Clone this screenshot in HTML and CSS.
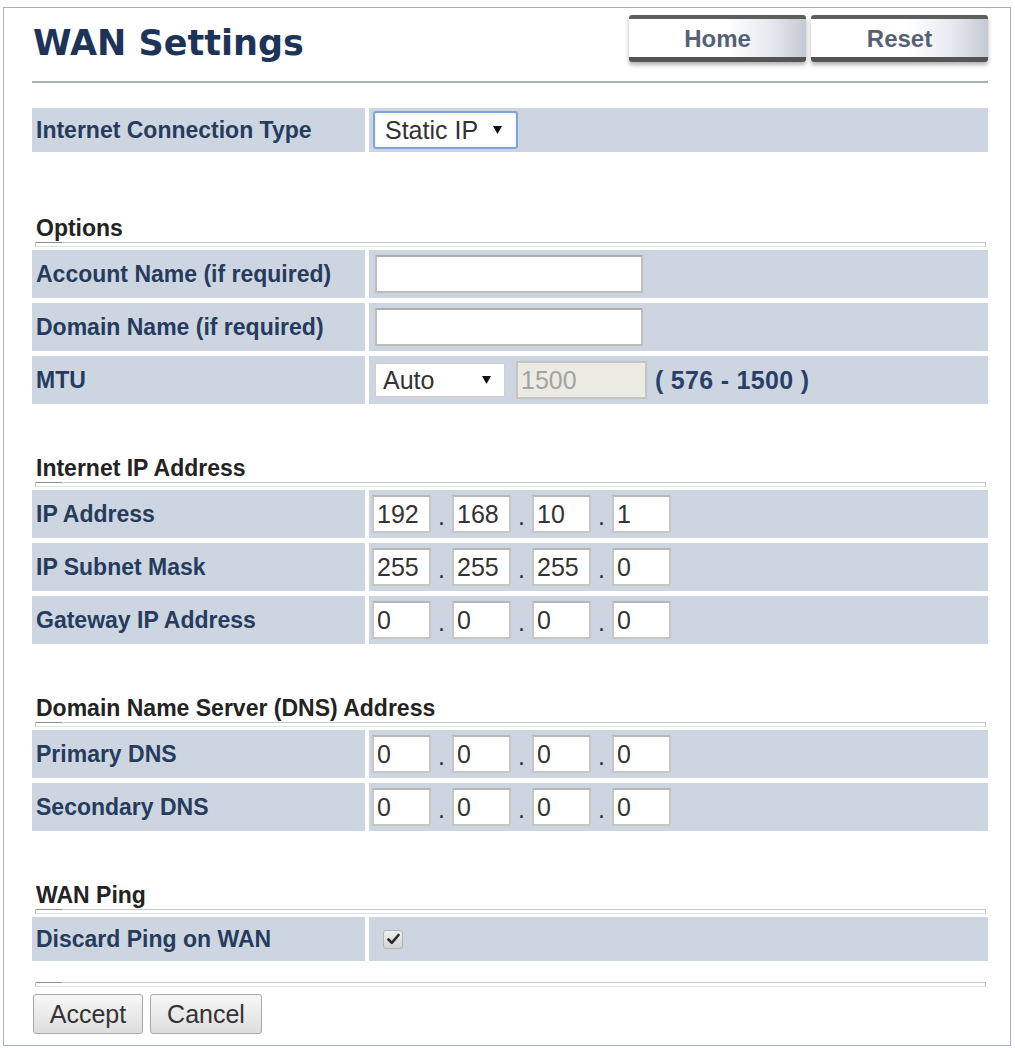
FILE: index.html
```html
<!DOCTYPE html>
<html lang="en">
<head>
<meta charset="utf-8">
<title>WAN Settings</title>
<link rel="stylesheet" href="styles.css">
</head>
<body>
<div class="panel">
  <header class="page-head">
    <h1 class="title">WAN Settings</h1>
    <nav class="head-links">
      <a class="tab-btn" href="#">Home</a>
      <a class="tab-btn" href="#">Reset</a>
    </nav>
  </header>
  <div class="title-rule"></div>

  <form class="wan-form">
    <div class="grid grid-top">
      <div class="lbl">Internet Connection Type</div>
      <div class="val">
        <span class="sel-wrap sel-focus">
          <select class="sel sel-type">
            <option>Static IP</option>
            <option>DHCP</option>
            <option>PPPoE</option>
          </select>
          <svg class="caret" width="9" height="8" viewBox="0 0 9 8"><path d="M0 0H9L4.5 8Z" fill="#111"/></svg>
        </span>
      </div>
    </div>

    <section class="group group-first">
      <h2 class="group-title">Options</h2>
      <div class="rule"></div>
      <div class="grid">
        <div class="lbl">Account Name (if required)</div>
        <div class="val"><input class="txt" type="text"></div>
        <div class="lbl">Domain Name (if required)</div>
        <div class="val"><input class="txt" type="text"></div>
        <div class="lbl">MTU</div>
        <div class="val">
          <span class="sel-wrap sel-plain">
            <select class="sel sel-mtu">
              <option>Auto</option>
              <option>Manual</option>
            </select>
            <svg class="caret caret-mtu" width="9" height="8" viewBox="0 0 9 8"><path d="M0 0H9L4.5 8Z" fill="#111"/></svg>
          </span>
          <input class="mtu-num" type="text" value="1500" disabled>
          <span class="range">( 576 - 1500 )</span>
        </div>
      </div>
    </section>

    <section class="group">
      <h2 class="group-title">Internet IP Address</h2>
      <div class="rule"></div>
      <div class="grid">
        <div class="lbl">IP Address</div>
        <div class="val ip">
          <input class="oct" value="192"><span class="dot">.</span><input class="oct" value="168"><span class="dot">.</span><input class="oct" value="10"><span class="dot">.</span><input class="oct" value="1">
        </div>
        <div class="lbl">IP Subnet Mask</div>
        <div class="val ip">
          <input class="oct" value="255"><span class="dot">.</span><input class="oct" value="255"><span class="dot">.</span><input class="oct" value="255"><span class="dot">.</span><input class="oct" value="0">
        </div>
        <div class="lbl">Gateway IP Address</div>
        <div class="val ip">
          <input class="oct" value="0"><span class="dot">.</span><input class="oct" value="0"><span class="dot">.</span><input class="oct" value="0"><span class="dot">.</span><input class="oct" value="0">
        </div>
      </div>
    </section>

    <section class="group">
      <h2 class="group-title">Domain Name Server (DNS) Address</h2>
      <div class="rule"></div>
      <div class="grid">
        <div class="lbl">Primary DNS</div>
        <div class="val ip">
          <input class="oct" value="0"><span class="dot">.</span><input class="oct" value="0"><span class="dot">.</span><input class="oct" value="0"><span class="dot">.</span><input class="oct" value="0">
        </div>
        <div class="lbl">Secondary DNS</div>
        <div class="val ip">
          <input class="oct" value="0"><span class="dot">.</span><input class="oct" value="0"><span class="dot">.</span><input class="oct" value="0"><span class="dot">.</span><input class="oct" value="0">
        </div>
      </div>
    </section>

    <section class="group">
      <h2 class="group-title">WAN Ping</h2>
      <div class="rule"></div>
      <div class="grid grid-short">
        <div class="lbl">Discard Ping on WAN</div>
        <div class="val">
          <span class="check" role="checkbox" aria-checked="true">
            <svg width="13" height="12" viewBox="0 0 13 12"><path d="M1.5 6.5L4.8 9.8L11.5 2" fill="none" stroke="#2b2b2b" stroke-width="2.6" stroke-linecap="round" stroke-linejoin="round"/></svg>
          </span>
        </div>
      </div>
    </section>

    <div class="rule rule-bottom"></div>
    <div class="actions">
      <button type="button" class="btn btn-accept">Accept</button>
      <button type="button" class="btn btn-cancel">Cancel</button>
    </div>
  </form>
</div>
</body>
</html>
```
FILE: styles.css
```css
html, body {
  margin: 0;
  padding: 0;
  background: #ffffff;
}

body {
  font-family: "Liberation Sans", Arial, sans-serif;
}

.panel {
  box-sizing: border-box;
  width: 1008px;
  height: 1039px;
  margin: 7px 0 0 3px;
  padding: 0 22px 0 28px;
  border: 1px solid #a7b0ba;
  background: #fff;
}

/* ---- header ---- */
.page-head {
  display: flex;
  justify-content: space-between;
  align-items: flex-start;
  padding-top: 7px;
}

.title {
  margin: 7px 0 0 1px;
  font-family: "DejaVu Sans", Verdana, sans-serif;
  font-weight: bold;
  font-size: 35px;
  line-height: 42px;
  color: #1e3358;
}

.head-links {
  display: flex;
  gap: 5px;
}

.tab-btn {
  box-sizing: border-box;
  display: flex;
  align-items: center;
  justify-content: center;
  width: 177px;
  height: 47px;
  padding-top: 1px;
  border-top: 4px solid #5e5e5e;
  border-bottom: 5px solid #545454;
  border-radius: 3px;
  background: linear-gradient(to right, #ffffff 0%, #ffffff 55%, #e6e9ee 80%, #c4cad3 100%);
  box-shadow: 0 3px 4px rgba(0, 0, 0, 0.3);
  font-family: "Liberation Sans", Arial, sans-serif;
  font-weight: bold;
  font-size: 24px;
  color: #566274;
  text-decoration: none;
}

.title-rule {
  height: 2px;
  margin-top: 17px;
  background: #a9b1bb;
}

/* ---- form grid ---- */
.wan-form {
  margin: 0;
}

.grid {
  display: grid;
  grid-template-columns: 333px 1fr;
  grid-auto-rows: 48px;
  column-gap: 4px;
  row-gap: 5px;
}

.grid-top {
  margin-top: 25px;
  grid-auto-rows: 44px;
}

.grid-short {
  grid-auto-rows: 44px;
}

.lbl,
.val {
  display: flex;
  align-items: center;
  background: #cdd6e0;
}

.lbl {
  padding-left: 4px;
  font-weight: bold;
  font-size: 23px;
  color: #263b5e;
}

.val {
  padding-left: 4px;
}

/* ---- sections ---- */
.group {
  margin-top: 51px;
}

.group-first {
  margin-top: 63px;
}

.group-title {
  margin: 0 0 1px 4px;
  font-weight: bold;
  font-size: 23px;
  line-height: 26px;
  color: #232323;
}

.rule {
  position: relative;
  height: 3px;
  margin: 0 2px 3px 3px;
  border: 1px solid #c3c7cc;
  border-bottom-color: #dde0e4;
  background: #fff;
}

.rule::before {
  content: "";
  position: absolute;
  left: 0;
  top: -1px;
  width: 26px;
  height: 1px;
  background: #8c9097;
}

.rule-bottom {
  margin-top: 21px;
  margin-bottom: 7px;
}

/* ---- controls ---- */
.sel-wrap {
  position: relative;
  display: inline-flex;
}

.sel {
  appearance: none;
  -webkit-appearance: none;
  box-sizing: border-box;
  margin: 0;
  background: #fff;
  font-family: "Liberation Sans", Arial, sans-serif;
  font-size: 25px;
  color: #333;
  outline: none;
}

.sel-type {
  width: 145px;
  height: 38px;
  padding: 0 0 0 10px;
  border: 2px solid #7fa4d9;
  border-radius: 3px;
  box-shadow: inset 0 0 2px rgba(90, 140, 210, 0.35);
}

.sel-mtu {
  width: 130px;
  height: 34px;
  padding: 0 0 0 7px;
  border: 1px solid #cfcfcf;
  border-radius: 1px;
}

.sel-plain {
  margin-left: 2px;
}

.caret {
  position: absolute;
  right: 16px;
  top: 15px;
  pointer-events: none;
}

.caret-mtu {
  right: 14px;
  top: 13px;
}

.txt {
  box-sizing: border-box;
  width: 268px;
  height: 38px;
  margin: 0 0 0 2px;
  padding: 0 4px;
  border: 2px solid #bdbdbd;
  border-top-color: #adadad;
  background: #fff;
  font-family: "Liberation Sans", Arial, sans-serif;
  font-size: 25px;
  outline: none;
}

.mtu-num {
  box-sizing: border-box;
  width: 131px;
  height: 38px;
  margin: 0 0 0 11px;
  padding: 0 3px;
  border: 2px solid #c4c4c0;
  background: #ebebe4;
  font-family: "Liberation Sans", Arial, sans-serif;
  font-size: 25px;
  color: #a3a3a0;
}

.range {
  margin-left: 8px;
  font-weight: bold;
  font-size: 25px;
  letter-spacing: 0.3px;
  color: #2a406b;
}

.ip {
  padding-left: 3px;
}

.oct {
  box-sizing: border-box;
  width: 59px;
  height: 38px;
  margin: 0;
  padding: 0 3px;
  border: 2px solid #c6c6c6;
  border-top-color: #b6b6b6;
  background: #fff;
  font-family: "Liberation Sans", Arial, sans-serif;
  font-size: 25px;
  color: #333;
  outline: none;
}

.dot {
  width: 21px;
  text-align: center;
  font-size: 25px;
  color: #333;
  padding-top: 4px;
}

.check {
  box-sizing: border-box;
  display: inline-flex;
  align-items: center;
  justify-content: center;
  width: 20px;
  height: 19px;
  margin-left: 10px;
  border: 1px solid #b5b5b5;
  border-radius: 3px;
  background: linear-gradient(#f0f0f0, #d3d3d3);
}

/* ---- footer buttons ---- */
.actions {
  display: flex;
  gap: 7px;
  margin-left: 1px;
}

.btn {
  box-sizing: border-box;
  height: 40px;
  margin: 0;
  padding: 0;
  border: 1px solid #a8a8a8;
  border-radius: 3px;
  background: linear-gradient(#f7f7f7, #dedede);
  font-family: "Liberation Sans", Arial, sans-serif;
  font-size: 25px;
  color: #333;
}

.btn-accept {
  width: 110px;
}

.btn-cancel {
  width: 112px;
}
```
